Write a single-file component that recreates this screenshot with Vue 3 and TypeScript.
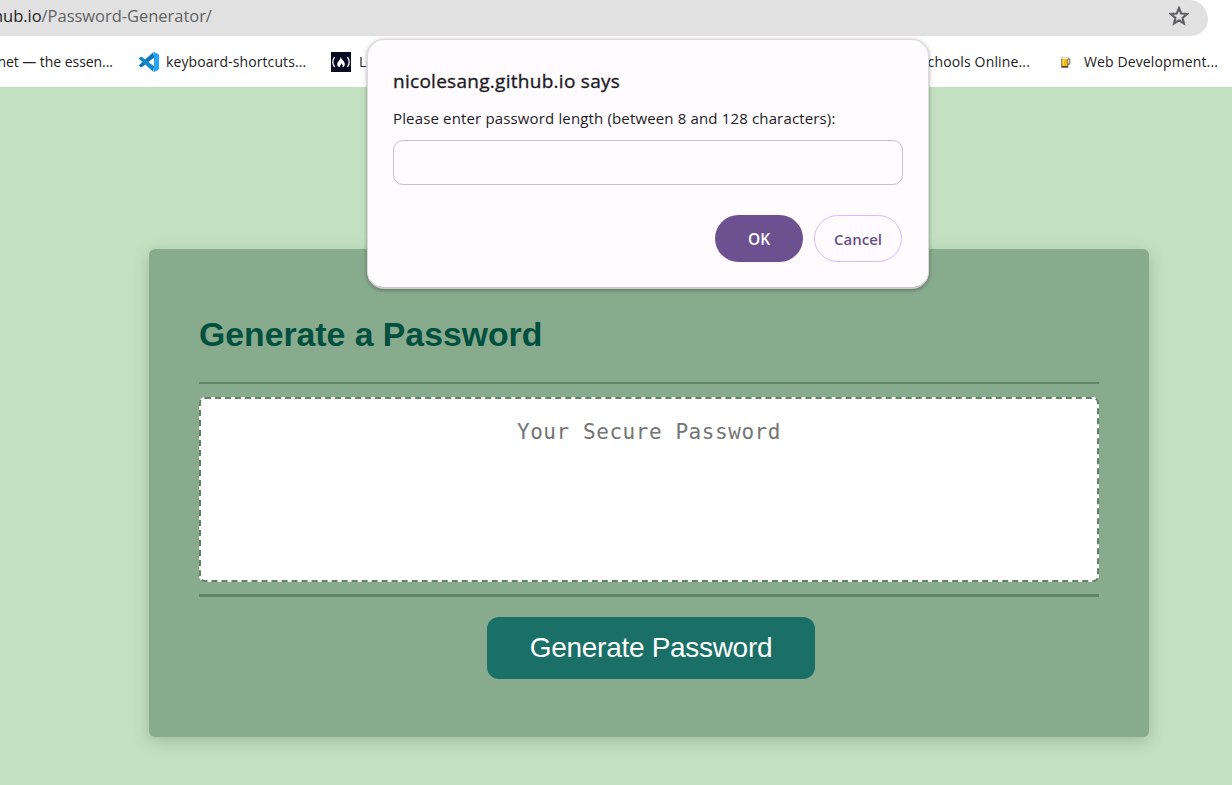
<script setup lang="ts">
import { ref } from 'vue'

const length = ref('')
const password = ref('')
</script>

<template>
  <div class="window">
    <header class="toolbar">
      <div class="address">
        <span class="url"><b>hub.io</b>/Password-Generator/</span>
        <svg class="star" viewBox="0 0 20 20" width="20" height="20">
          <path d="M10 2.2 L12.2 7.5 L18 8 L13.6 11.8 L14.9 17.4 L10 14.4 L5.1 17.4 L6.4 11.8 L2 8 L7.8 7.5 Z" fill="none" stroke="#5f6164" stroke-width="2.2" />
        </svg>
      </div>
    </header>

    <nav class="bookmarks">
      <div class="first"><span>net — the essen...</span></div>
      <svg class="code" width="20" height="20" viewBox="0 0 100 100" preserveAspectRatio="none">
        <path d="M71 1 L2 64 Q-1 67 2 70 L9 76 Q12 78 15 75 L76 28 Z" fill="#0a76b9" />
        <path d="M71 99 L2 36 Q-1 33 2 30 L9 24 Q12 22 15 25 L76 72 Z" fill="#1088cc" />
        <path d="M70 0 Q74 -1 78 1 L96 10 Q100 12 100 17 V83 Q100 88 96 90 L78 99 Q74 101 70 99 Q75 100 75 94 V6 Q75 0 70 0Z" fill="#26a6f2" />
      </svg>
      <span class="t2">keyboard-shortcuts...</span>
      <svg class="camp" width="20" height="20" viewBox="0 0 20 20">
        <rect width="20" height="20" fill="#0a0a23" />
        <path d="M3.6 5 Q0 10 3.6 15.2 M16.4 5 Q20 10 16.4 15.2" fill="none" stroke="#e8e8ee" stroke-width="1.4" />
        <path d="M9.4 4.7 C10.1 7 13.6 9 13.9 12 C13.9 14 12.6 15 11.4 15.2 C12.4 13.5 11.3 12.7 10.5 11.2 C10.1 12.7 8.9 13.2 8.7 15.2 C7 14.9 6 13.5 6.2 11.8 C6.6 9.5 9.9 7.6 9.4 4.7Z" fill="#fff" />
      </svg>
      <span class="t3">Learn</span>
      <div class="school"><span>Schools Online...</span></div>
      <svg class="beer" width="10" height="12" viewBox="0 0 10 12">
        <path d="M6.5 3 H8.8 V8.2 H6.5" fill="none" stroke="#69655c" stroke-width="1" />
        <path d="M.7 1.4 H6.8 V11.2 H.7Z" fill="#f2b90d" stroke="#655020" stroke-width=".8" />
        <path d="M2.4 4 V9.5" stroke="#ffe25a" stroke-width="1.2" />
        <path d="M.5 1 H7 V3.2 H.5Z" fill="#eee8d2" />
        <path d="M.4 10.8 H7.2" stroke="#443b2c" stroke-width="1.2" />
      </svg>
      <span class="t5">Web Development...</span>
    </nav>

    <main class="page">
      <section class="card">
        <h2>Generate a Password</h2>
        <div class="field">
          <textarea v-model="password" readonly placeholder="Your Secure Password" />
        </div>
        <button class="generate">Generate Password</button>
      </section>
    </main>

    <div class="dialog" role="dialog">
      <div class="title">nicolesang.github.io says</div>
      <label class="message" for="length">Please enter password length (between 8 and 128 characters):</label>
      <input id="length" v-model="length" type="text" />
      <div class="actions">
        <button class="ok">OK</button>
        <button class="cancel">Cancel</button>
      </div>
    </div>
  </div>
</template>

<style>
body { margin: 0; overflow: hidden; }
</style>

<style scoped>
* { box-sizing: border-box; }
.window {
  position: relative;
  width: 1232px;
  height: 785px;
  overflow: hidden;
  display: flex;
  flex-direction: column;
  background: #fff;
  font-family: "Open Sans", "Noto Sans", sans-serif;
}
.toolbar { height: 36px; flex: none; }
.address {
  width: 1208px;
  height: 36px;
  display: flex;
  justify-content: space-between;
  background: #e1e1e1;
  border-radius: 0 18px 18px 0 / 0 20px 16px 0;
  padding-right: 19px;
}
.url {
  font-size: 16.5px;
  line-height: 32px;
  letter-spacing: -0.03px;
  margin-left: -7px;
  color: #626262;
  white-space: nowrap;
}
.url b { font-weight: 400; color: #222; }
.star { margin-top: 6px; }
.bookmarks {
  height: 51px;
  flex: none;
  display: flex;
  align-items: center;
  padding-top: 1px;
  border-bottom: 1px solid #f6f8f6;
  font-size: 14px;
  line-height: 20px;
  color: #222;
  white-space: nowrap;
}
.bookmarks svg { flex: none; }
.first, .school { display: flex; justify-content: flex-end; overflow: hidden; flex: none; }
.first { width: 113px; margin-right: 26px; letter-spacing: -0.05px; }
.t2 { width: 141px; margin-left: 7px; letter-spacing: 0.1px; }
.camp { margin-left: 24px; }
.t3 { width: 50px; margin-left: 8px; }
.school { width: 122px; margin-left: 499px; letter-spacing: 0.15px; }
.beer { margin-left: 31px; }
.t5 { margin-left: 13px; letter-spacing: 0.12px; }
.page {
  flex: 1;
  padding: 162px 83px 48px 149px;
  background: #c3e1c1;
}
.card {
  width: 1000px;
  height: 488px;
  display: flex;
  flex-direction: column;
  align-items: center;
  padding: 50px;
  border-radius: 6px;
  background: #88aa8d;
  box-shadow: 0 4px 15px rgba(50, 80, 50, 0.25);
  font-family: "Liberation Sans", Arial, sans-serif;
}
h2 {
  align-self: stretch;
  margin: 0;
  height: 83px;
  padding-top: 14px;
  font-size: 33.75px;
  line-height: 42px;
  color: #00503f;
}
.field {
  width: 900px;
  height: 215px;
  border-top: 2px solid #608265;
  border-bottom: 3px solid #608265;
  padding-top: 13px;
}
textarea {
  display: block;
  width: 900px;
  height: 185px;
  padding: 19px 20px;
  border: 2px dashed #608265;
  border-radius: 6px;
  background: #fff;
  resize: none;
  outline: none;
  overflow: hidden;
  text-align: center;
  font-family: "DejaVu Sans Mono", monospace;
  font-size: 21px;
  letter-spacing: 0.56px;
  line-height: 28px;
}
textarea::placeholder { color: #757575; }
.generate {
  flex: none;
  width: 328px;
  height: 62px;
  margin: 20px 0 0 4px;
  padding: 0;
  border: 0;
  border-radius: 12px;
  background: #1a6f66;
  color: #fff;
  font: 28px/62px "Liberation Sans", Arial, sans-serif;
  letter-spacing: -0.3px;
}
.dialog {
  position: absolute;
  left: 367px;
  top: 39px;
  width: 562px;
  height: 250px;
  display: flex;
  flex-direction: column;
  padding: 27px 25px 25px;
  border: 1px solid #ddd9df;
  border-bottom: 2px solid #c9cbca;
  border-radius: 17px;
  background: #fffbff;
  box-shadow: 0 1px 4px rgba(0, 0, 0, 0.35);
  color: #1c1b1f;
}
.title {
  height: 28px;
  font-size: 19px;
  line-height: 28px;
  letter-spacing: 0.28px;
  -webkit-text-stroke: 0.35px #1c1b1f;
  white-space: nowrap;
}
.message {
  height: 45px;
  padding-top: 11px;
  font-size: 15px;
  line-height: 24px;
  letter-spacing: 0.15px;
  white-space: nowrap;
}
input {
  flex: none;
  width: 510px;
  height: 45px;
  padding: 0 12px;
  border: 1px solid #c7c2c9;
  border-radius: 10px;
  background: transparent;
  outline: none;
}
.actions { display: flex; justify-content: flex-end; gap: 11px; margin: 30px 1px 0 0; }
.actions button {
  width: 88px;
  height: 47px;
  padding: 0;
  border-radius: 24px;
  font: 600 15px "Open Sans", sans-serif;
}
.actions .ok { border: 0; background: #6d5090; color: #fff; font-size: 15.5px; }
.cancel { border: 1px solid #d8baff; background: #fffbff; color: #68508b; }
</style>
